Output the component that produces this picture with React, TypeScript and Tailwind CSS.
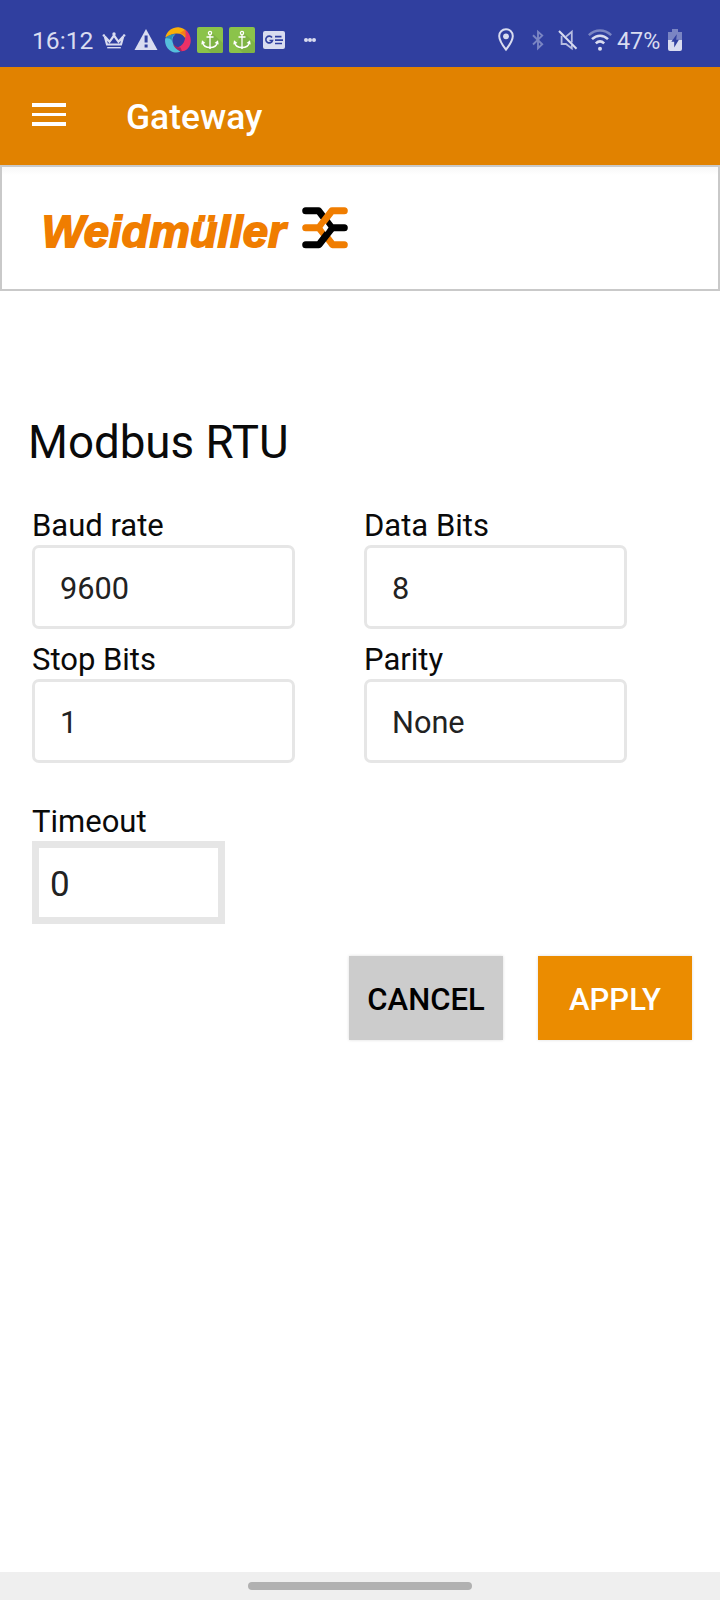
import type { ReactNode } from "react";

const INK = "#d9dcf0";

function CrownIcon() {
  return (
    <svg className="ml-[8px] h-[26px] w-[24px]" viewBox="0 0 24 26" fill="none" stroke={INK}>
      <path d="M2.800 9.500 5 17.500H19L21.200 9.500 16.500 14.800 12 8.500 7.500 14.800Z" strokeWidth="2.200" />
      <path d="M5.200 20.700h13.600" strokeWidth="1.400" />
      <g fill={INK} stroke="none">
        <circle cx="1.900" cy="8.500" r="1.300" />
        <circle cx="12" cy="7" r="1.700" />
        <circle cx="22.100" cy="8.500" r="1.300" />
      </g>
    </svg>
  );
}

function WarningIcon() {
  return (
    <svg className="ml-[8px] h-[26px] w-[24px]" viewBox="0 0 24 26" fill={INK}>
      <path d="M12 2 23.500 23H.5Z" />
      <path d="M10.600 8.500h3v7h-3zM10.600 17.500h3v3h-3z" fill="#303f9f" />
    </svg>
  );
}

function SwirlIcon() {
  return (
    <svg className="ml-[7px] h-[26px] w-[26px]" viewBox="0 0 26 26">
      <path d="M.3 10.500C2 3.500 8 0 13.500.3c3.600.2 6 1.700 7.300 3.500l-.5 7.500C18 6 10 4 .3 10.500Z" fill="#fbaf08" />
      <path d="M20.200 2.500c4.500 3.500 6.300 8.800 5.300 13.500-1 5-4.500 8.200-9 8.300L9.500 20.500c6.500.5 12.500-5 10.700-18Z" fill="#ea3167" />
      <path d="M20.200 2.500l.6 9C20 8.500 18 6.500 14.500 6.200Z" fill="#f57c1b" />
      <path d="M.3 11.500C3 8.800 7 7.300 10.500 7.600 5.500 10 6 19 15.500 24.500 11 27 4.500 24.800 1.800 20 .2 17-.3 14 .3 11.500Z" fill="#55bfdc" />
      <path d="M.3 11.500C3 8.800 7 7.300 10.500 7.600 7 9 6.500 12 7 14 5.500 11.500 3 11 .3 11.500Z" fill="#2f8eb4" />
      <path d="M8 17c2 2.200 4.800 3.500 7.500 3.400l1.500 3.900c-4-.6-7.500-3.300-9-7.300Z" fill="#a92560" />
    </svg>
  );
}

function AnchorIcon() {
  return (
    <svg className="ml-[6px] h-[26px] w-[26px]" viewBox="0 0 26 26">
      <rect width="26" height="26" rx="2" fill="#8bc34a" />
      <path d="M14.500 5.500 26 16v8a2 2 0 0 1-2 2H14L6 18.500Z" fill="#7fb445" />
      <g fill="none" stroke="#fff" strokeWidth="1.300">
        <circle cx="13" cy="6" r="1.600" />
        <path d="M13 7.600V21M9.500 10h7M5.500 15.500c.8 3.500 3.800 5 7.500 5s6.700-1.500 7.500-5" />
      </g>
      <path d="M4.300 17.500 5 13.300l3.400 2.600ZM21.700 17.500 21 13.300l-3.400 2.600ZM11 20.500h4l-2 1.700Z" fill="#fff" />
    </svg>
  );
}

function NewsIcon() {
  return (
    <svg className="ml-[8px] h-[26px] w-[22px]" viewBox="0 0 22 26">
      <rect y="4" width="22" height="18" rx="2" fill={INK} />
      <g fill="none" stroke="#303f9f" strokeWidth="1.600">
        <path d="M9 10.500A3.400 3.400 0 1 0 9.500 13.500H6.500" />
        <path d="M12 9.600h6.500M12 13.100h8M12 16.500h7" />
      </g>
    </svg>
  );
}

function DotsIcon() {
  return (
    <svg className="ml-[19px] h-[26px] w-[12px]" viewBox="0 0 12 26" fill={INK}>
      <circle cx="2" cy="13" r="2" />
      <circle cx="6" cy="13" r="2" />
      <circle cx="10" cy="13" r="2" />
    </svg>
  );
}

function PinIcon() {
  return (
    <svg className="h-[26px] w-[16px]" viewBox="0 0 16 26">
      <path d="M8 2.300c-3.900 0-6.800 2.900-6.800 6.600C1.200 13.700 8 22.700 8 22.700s6.800-9 6.800-13.800c0-3.700-2.900-6.600-6.800-6.600Z" fill="none" stroke={INK} strokeWidth="2" />
      <circle cx="8" cy="9.300" r="2.900" fill={INK} />
    </svg>
  );
}

function BluetoothIcon() {
  return (
    <svg className="ml-[18px] h-[26px] w-[12px]" viewBox="0 0 12 26" fill="none" stroke="#7a85c3" strokeWidth="1.900">
      <path d="M1 8.200 10.200 17.200 6 21.200V4.800L10.200 8.600 1 17.500" />
    </svg>
  );
}

function MuteIcon() {
  return (
    <svg className="ml-[14px] h-[26px] w-[20px]" viewBox="0 0 20 26" fill="none" stroke="#b6bce0" strokeWidth="1.800">
      <path d="M8 9.600 13.800 4.700V15.500M4.500 9.600H3.600V17H8L13.800 21.500V18" />
      <path d="M1 4 18.500 21.800" stroke={INK} strokeWidth="2" />
    </svg>
  );
}

function WifiIcon() {
  return (
    <svg className="ml-[10px] h-[26px] w-[24px]" viewBox="0 0 24 26" fill="none" strokeWidth="2.500">
      <path d="M.8 8.200C7.500 2 16.500 2 23.200 8.200" stroke="#7a85c3" />
      <path d="M4 12.200C8.800 7.500 15.200 7.500 20 12.200M7.800 16.300c2.600-2.400 5.800-2.400 8.400 0" stroke={INK} />
      <circle cx="12" cy="21.700" r="2" fill={INK} />
    </svg>
  );
}

function BatteryIcon() {
  return (
    <svg className="h-[26px] w-[14px]" viewBox="0 0 14 26">
      <path d="M4 2h6v3h4v8H0V5h4Z" fill="#7a85c3" />
      <path d="M0 13h14v9a2 2 0 0 1-2 2H2a2 2 0 0 1-2-2Z" fill={INK} />
      <path d="M8.800 7.200 3.300 14.800h2.900v5.700l4.700-7.700H8.200Z" fill="#303f9f" />
    </svg>
  );
}

function BrandMark() {
  return (
    <svg className="mt-[40px] ml-[2px] h-[42px] w-[46px]" viewBox="0 0 46 42" fill="none" strokeWidth="7" strokeLinecap="round" strokeLinejoin="round">
      <path d="M42.300 37.700H30.500L24 29" stroke="#f07d00" />
      <path d="M3.700 3.700H16.500L29.500 20.700H42.300" stroke="#000" />
      <path d="M42.300 3.700H30L17 20.700H3.700M17 20.700 22 27" stroke="#f07d00" />
      <path d="M3.700 37.700H17L29.500 21.500" stroke="#000" />
      <path d="M23.500 16.500 26.500 20.500 23.500 25 20.500 20.800Z" fill="#fff" />
    </svg>
  );
}

function Field({ label, value }: { label: string; value: string }) {
  return (
    <div className="flex w-[263px] flex-col">
      <span className="h-[36px] text-[31px] leading-[36px] whitespace-nowrap">{label}</span>
      <div className="mt-[1px] flex h-[84px] items-center rounded-[7px] border-[3px] border-[#e6e6e6] bg-white pt-[4px] pl-[25px] text-[#222]">
        <span className="text-[30.700px] leading-[36px]">{value}</span>
      </div>
    </div>
  );
}

function ActionButton({ className, children }: { className: string; children: ReactNode }) {
  return (
    <button className={`flex h-[84px] w-[154px] items-center justify-center pt-[3px] text-[31px] leading-[36px] font-medium shadow-[0_0_3px_rgba(0,0,0,0.14)] ${className}`}>
      {children}
    </button>
  );
}

export default function App() {
  return (
    <div className="flex h-[1600px] w-[720px] flex-col overflow-hidden bg-white font-['Roboto',sans-serif] text-[#0a0a0a]">
      <div className="flex h-[67px] shrink-0 items-start justify-between bg-[#303f9f] pt-[27px] pr-[38px] pl-[32px]">
        <div className="flex items-start">
          <span className="h-[26px] w-[62px] text-[24.700px] leading-[28px] whitespace-nowrap text-[#d9dcf0]">16:12</span>
          <CrownIcon />
          <WarningIcon />
          <SwirlIcon />
          <AnchorIcon />
          <AnchorIcon />
          <NewsIcon />
          <DotsIcon />
        </div>
        <div className="flex items-start">
          <PinIcon />
          <BluetoothIcon />
          <MuteIcon />
          <WifiIcon />
          <span className="ml-[5px] h-[26px] w-[51px] text-[23.300px] leading-[28px] whitespace-nowrap text-[#d9dcf0]">47%</span>
          <BatteryIcon />
        </div>
      </div>

      <header className="flex h-[98px] shrink-0 items-center bg-[#e18200] pl-[32px] text-white">
        <div className="mb-[3px] flex w-[34px] flex-col gap-[6px]">
          <div className="h-[3.500px] bg-white" />
          <div className="h-[3.500px] bg-white" />
          <div className="h-[3.500px] bg-white" />
        </div>
        <h1 className="ml-[60px] pt-[2px] text-[35.400px] leading-[42px] font-medium">Gateway</h1>
      </header>

      <div className="flex h-[126px] shrink-0 border-2 border-[#c9c9c9] bg-[linear-gradient(#f7f7f7,#ffffff_8px)] pl-[30px]">
        <svg className="mt-[25px] h-[70px] w-[268px] overflow-visible" viewBox="0 0 268 70">
          <text x="9.800" y="55" fill="#f07d00" stroke="#f07d00" strokeWidth="1.800" fontFamily="'Liberation Sans', sans-serif" fontSize="45" fontWeight="700" fontStyle="italic" textLength="244" lengthAdjust="spacingAndGlyphs">
            Weidmüller
          </text>
        </svg>
        <BrandMark />
      </div>

      <main className="flex flex-1 flex-col pl-[32px]">
        <h2 className="mt-[124px] -ml-[4px] h-[56px] text-[45.700px] leading-[56px] whitespace-nowrap">Modbus RTU</h2>
        <div className="mt-[37px] grid grid-cols-[263px_263px] gap-x-[69px] gap-y-[13px]">
          <Field label="Baud rate" value="9600" />
          <Field label="Data Bits" value="8" />
          <Field label="Stop Bits" value="1" />
          <Field label="Parity" value="None" />
        </div>
        <span className="mt-[41px] h-[36px] text-[31px] leading-[36px]">Timeout</span>
        <div className="mt-[1px] flex h-[83px] w-[193px] items-center border-[7px] border-[#e6e6e6] pt-[4px] pl-[11px] text-[35px] leading-[42px] text-[#222]">0</div>
        <div className="mt-[32px] flex justify-end gap-[35px] pr-[28px]">
          <ActionButton className="bg-[#cccccc] text-black">CANCEL</ActionButton>
          <ActionButton className="bg-[#eb8c00] text-white">APPLY</ActionButton>
        </div>
      </main>

      <div className="flex h-[28px] shrink-0 justify-center bg-[#efefef] pt-[10px]">
        <div className="h-[8px] w-[224px] rounded-full bg-[#b1b1b1]" />
      </div>
    </div>
  );
}
